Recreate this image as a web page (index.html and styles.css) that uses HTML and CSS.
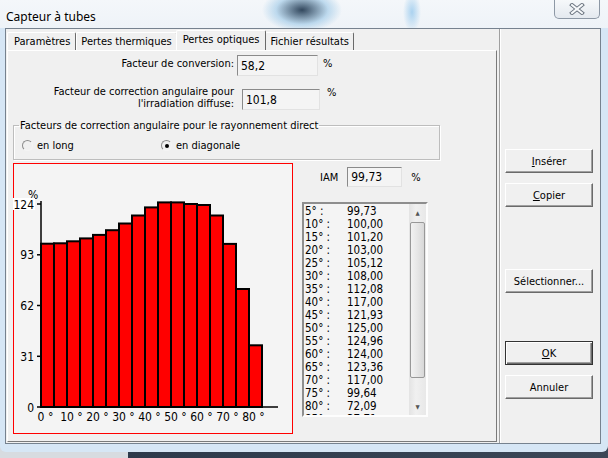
FILE: index.html
```html
<!DOCTYPE html>
<html lang="fr">
<head>
    <meta charset="UTF-8">
    <title>Capteur à tubes</title>
    <link rel="stylesheet" href="styles.css">
</head>
<body>
    <div class="window">
        <div class="titlebar">
            <span class="title">Capteur à tubes</span>
            <button class="close" type="button">
                <svg width="16" height="12" viewBox="0 0 16 12">
                    <path d="M3 2 L13 10 M13 2 L3 10" stroke="#6c7580" stroke-width="4" stroke-linecap="square"/>
                    <path d="M3 2 L13 10 M13 2 L3 10" stroke="#f7f9fb" stroke-width="2" stroke-linecap="square"/>
                </svg>
            </button>
        </div>

        <div class="client">
            <div class="tabs-pane">
                <div class="tab-strip">
                    <div class="tab first">Paramètres</div>
                    <div class="tab">Pertes thermiques</div>
                    <div class="tab active">Pertes optiques</div>
                    <div class="tab">Fichier résultats</div>
                </div>

                <div class="tab-page">
                    <div class="field">
                        <label class="field-label">Facteur de conversion:</label>
                        <div class="box conv">58,2</div>
                        <span class="unit">%</span>
                    </div>

                    <div class="field diffuse">
                        <label class="field-label">Facteur de correction angulaire pour<br>l'irradiation diffuse:</label>
                        <div class="box">101,8</div>
                        <span class="unit">%</span>
                    </div>

                    <fieldset class="group">
                        <legend>Facteurs de correction angulaire pour le rayonnement direct</legend>
                        <div class="radios">
                            <label class="radio"><span class="dot"></span>en long</label>
                            <label class="radio"><span class="dot checked"></span>en diagonale</label>
                        </div>
                    </fieldset>

                    <div class="chart-row">
                        <div class="chart">
                            <svg width="280" height="271" viewBox="0 0 280 271">
                                <rect x="0.5" y="0.5" width="279" height="270" fill="#f4f4f4" stroke="#ff0000"/>
                                <text class="axis-text" x="15" y="36">%</text>
                                <rect x="0" y="35" width="22" height="12" fill="#ffffff"/>

                                <g fill="#ff0000" stroke="#000" stroke-width="2">
                                    <rect x="28" y="80.7" width="13" height="163.3"/>
                                    <rect x="41" y="80.3" width="13" height="163.7"/>
                                    <rect x="54" y="78.3" width="13" height="165.7"/>
                                    <rect x="67" y="75.4" width="13" height="168.6"/>
                                    <rect x="80" y="71.9" width="13" height="172.1"/>
                                    <rect x="93" y="67.2" width="13" height="176.8"/>
                                    <rect x="106" y="60.5" width="13" height="183.5"/>
                                    <rect x="119" y="52.5" width="13" height="191.5"/>
                                    <rect x="132" y="44.4" width="13" height="199.6"/>
                                    <rect x="145" y="39.4" width="13" height="204.6"/>
                                    <rect x="158" y="39.4" width="13" height="204.6"/>
                                    <rect x="171" y="41" width="13" height="203"/>
                                    <rect x="184" y="42" width="13" height="202"/>
                                    <rect x="197" y="52.5" width="13" height="191.5"/>
                                    <rect x="210" y="80.9" width="13" height="163.1"/>
                                    <rect x="223" y="126" width="13" height="118"/>
                                    <rect x="236" y="182.3" width="13" height="61.7"/>
                                </g>

                                <g stroke="#000" stroke-width="1.5">
                                    <line x1="28" y1="38" x2="28" y2="244"/>
                                    <line x1="28" y1="244" x2="265" y2="244"/>
                                    <line x1="24" y1="41" x2="28" y2="41"/>
                                    <line x1="24" y1="91.8" x2="28" y2="91.8"/>
                                    <line x1="24" y1="142.5" x2="28" y2="142.5"/>
                                    <line x1="24" y1="193.3" x2="28" y2="193.3"/>
                                    <line x1="24" y1="244" x2="28" y2="244"/>
                                </g>

                                <g class="axis-text" text-anchor="end">
                                    <text x="21" y="45.5">124</text>
                                    <text x="21" y="96.3">93</text>
                                    <text x="21" y="147">62</text>
                                    <text x="21" y="197.8">31</text>
                                    <text x="21" y="248.5">0</text>
                                </g>

                                <g class="axis-text">
                                    <text x="24.6" y="258">0 °</text>
                                    <text x="47.2" y="258">10 °</text>
                                    <text x="73.2" y="258">20 °</text>
                                    <text x="99.2" y="258">30 °</text>
                                    <text x="125.2" y="258">40 °</text>
                                    <text x="151.2" y="258">50 °</text>
                                    <text x="177.2" y="258">60 °</text>
                                    <text x="203.2" y="258">70 °</text>
                                    <text x="229.2" y="258">80 °</text>
                                </g>
                            </svg>
                        </div>

                        <div class="iam-col">
                            <div class="iam-row">
                                <span>IAM</span>
                                <div class="box iam">99,73</div>
                                <span class="unit">%</span>
                            </div>

                            <div class="list">
                                <div class="list-items">
                                    <div class="item"><span class="deg">5° :</span><span>99,73</span></div>
                                    <div class="item"><span class="deg">10° :</span><span>100,00</span></div>
                                    <div class="item"><span class="deg">15° :</span><span>101,20</span></div>
                                    <div class="item"><span class="deg">20° :</span><span>103,00</span></div>
                                    <div class="item"><span class="deg">25° :</span><span>105,12</span></div>
                                    <div class="item"><span class="deg">30° :</span><span>108,00</span></div>
                                    <div class="item"><span class="deg">35° :</span><span>112,08</span></div>
                                    <div class="item"><span class="deg">40° :</span><span>117,00</span></div>
                                    <div class="item"><span class="deg">45° :</span><span>121,93</span></div>
                                    <div class="item"><span class="deg">50° :</span><span>125,00</span></div>
                                    <div class="item"><span class="deg">55° :</span><span>124,96</span></div>
                                    <div class="item"><span class="deg">60° :</span><span>124,00</span></div>
                                    <div class="item"><span class="deg">65° :</span><span>123,36</span></div>
                                    <div class="item"><span class="deg">70° :</span><span>117,00</span></div>
                                    <div class="item"><span class="deg">75° :</span><span>99,64</span></div>
                                    <div class="item"><span class="deg">80° :</span><span>72,09</span></div>
                                    <div class="item"><span class="deg">85° :</span><span>37,71</span></div>
                                </div>
                                <div class="scrollbar">
                                    <div class="arrow">&#9650;</div>
                                    <div class="track"><div class="thumb"></div></div>
                                    <div class="arrow">&#9660;</div>
                                </div>
                            </div>
                        </div>
                    </div>
                </div>
            </div>

            <div class="side">
                <button type="button" class="btn insert"><u>I</u>nsérer</button>
                <button type="button" class="btn copy"><u>C</u>opier</button>
                <button type="button" class="btn select">Sélectionner...</button>
                <button type="button" class="btn ok"><u>O</u>K</button>
                <button type="button" class="btn cancel">Annuler</button>
            </div>
        </div>
    </div>
</body>
</html>
```

FILE: styles.css
```css
* {
    box-sizing: border-box;
}
body {
    margin: 0;
    width: 608px;
    height: 458px;
    overflow: hidden;
    background: linear-gradient(to right, #d7dbe0 0, #d7dbe0 128px, #2d3a4b 128px, #3c4757 100%);
    font-family: "DejaVu Sans Condensed", "Liberation Sans", sans-serif;
    font-size: 11px;
    color: #000;
}
.window {
    width: 608px;
    height: 452px;
    background: #d6e6f5;
    border-radius: 0 0 6px 6px;
    display: flex;
    flex-direction: column;
}
.titlebar {
    height: 28px;
    display: flex;
    align-items: flex-start;
    background:
        radial-gradient(ellipse 40px 22px at 302px 10px, rgba(40, 62, 85, 0.95), rgba(110, 175, 220, 0.4) 65%, transparent),
        radial-gradient(ellipse 9px 20px at 412px 12px, rgba(140, 195, 235, 0.7), transparent),
        linear-gradient(#f4f7fa, #eef3f8);
}
.title {
    font-family: "Noto Sans", "Open Sans", sans-serif;
    font-size: 12px;
    margin: 8px 0 0 6px;
    text-shadow: 0 0 5px #fff, 0 0 8px #fff;
}
.close {
    margin-left: auto;
    margin-right: 8px;
    width: 46px;
    height: 19px;
    padding: 0;
    border: 1px solid #8d98a5;
    border-top: none;
    border-radius: 0 0 5px 5px;
    background: linear-gradient(#f6f8fa, #e4e9ef);
    display: flex;
    align-items: center;
    justify-content: center;
}
.client {
    margin: 0 7px 0 5px;
    height: 416px;
    border: 1px solid #76828f;
    background: #f0f0f0;
    display: flex;
}
.tabs-pane {
    width: 494px;
    padding: 1px 2px 1px 1px;
    border-right: 1px solid #a0a0a0;
    display: flex;
    flex-direction: column;
}
.tab-strip {
    height: 20px;
    display: flex;
    align-items: flex-end;
}
.tab {
    height: 18px;
    padding: 2px 4px 0 4px;
    border: 1px solid #fff;
    border-right: 1px solid #6a6a6a;
    border-bottom: none;
    border-radius: 2px 2px 0 0;
    white-space: nowrap;
}
.tab.first {
    padding: 2px 5px 0 6px;
}
.tab.active {
    height: 20px;
    padding: 2px 6px 0 6px;
    margin: 0 -1px 0 -1px;
    position: relative;
    background: #f0f0f0;
}
.tab-page {
    flex: 1;
    padding: 4px 0 0 0;
    border: 1px solid #fff;
    border-right-color: #7a7a7a;
    border-bottom-color: #7a7a7a;
}
.field {
    display: flex;
    align-items: flex-start;
}
.field-label {
    width: 226px;
    text-align: right;
    padding-top: 2px;
    line-height: 13px;
}
.box {
    height: 21px;
    padding: 3px 3px 0 3px;
    font-size: 12px;
    background: #f4f4f4;
    border: 1px solid;
    border-color: #8a8a8a #e2e2e2 #e2e2e2 #8a8a8a;
}
.box.conv {
    width: 81px;
    margin-left: 3px;
}
.unit {
    padding-top: 2px;
    line-height: 13px;
    margin-left: 5px;
}
.field.diffuse {
    margin-top: 13px;
}
.field.diffuse .field-label {
    line-height: 12px;
    padding-top: 0;
    margin-top: -3px;
}
.field.diffuse .box {
    width: 78px;
    margin-left: 8px;
}
.field.diffuse .unit {
    margin-left: 7px;
    padding-top: 0;
    margin-top: -3px;
}
.group {
    margin: 9px 0 0 5px;
    width: 427px;
    padding: 7px 0 7px 8px;
    border: 1px solid #bdbdbd;
    box-shadow: inset 1px 1px #fff, 1px 1px #fff;
}
.group legend {
    padding: 0 1px;
    margin-left: -3px;
    line-height: 13px;
}
.radios {
    display: grid;
    grid-template-columns: 139px auto;
    line-height: 13px;
}
.radio {
    display: flex;
    align-items: center;
    gap: 4px;
}
.dot {
    width: 11px;
    height: 11px;
    border-radius: 50%;
    border: 1px solid;
    border-color: #8c8c8c #f4f4f4 #f4f4f4 #8c8c8c;
    background: #f0f0f0;
    display: flex;
    align-items: center;
    justify-content: center;
}
.dot.checked::after {
    content: "";
    width: 4px;
    height: 4px;
    border-radius: 50%;
    background: #000;
}
.chart-row {
    margin-top: 3px;
    display: flex;
    align-items: flex-start;
}
.chart {
    margin-left: 5px;
    width: 280px;
    height: 271px;
}
.chart svg {
    display: block;
}
.axis-text {
    font-family: "DejaVu Sans Condensed", "Liberation Sans", sans-serif;
    font-size: 12px;
    fill: #000;
}
.iam-col {
    margin-left: 9px;
    width: 126px;
}
.iam-row {
    margin-top: 4px;
    padding-left: 18px;
    display: flex;
    align-items: center;
}
.box.iam {
    width: 55px;
    height: 20px;
    padding-top: 2px;
    margin-left: 9px;
}
.iam-row .unit {
    margin-left: 9px;
    padding-top: 0;
}
.list {
    margin-top: 15px;
    height: 215px;
    display: flex;
    border: 2px solid;
    border-color: #8e8e8e #fdfdfd #fdfdfd #8e8e8e;
    background: #f4f4f4;
}
.list-items {
    flex: 1;
    overflow: hidden;
    padding: 1px 0 0 1px;
    font-size: 11.5px;
}
.item {
    display: flex;
    line-height: 13px;
}
.deg {
    width: 42px;
}
.scrollbar {
    width: 17px;
    display: flex;
    flex-direction: column;
    background: linear-gradient(to right, #e3e3e3, #f0f0f0 40%, #e8e8e8);
}
.arrow {
    height: 17px;
    font-size: 6px;
    color: #555;
    display: flex;
    align-items: center;
    justify-content: center;
}
.track {
    flex: 1;
    padding: 1px 1px;
}
.thumb {
    height: 156px;
    border: 1px solid #989898;
    border-radius: 2px;
    background: linear-gradient(to right, #f2f2f2, #e6e6e6 50%, #d8d8d8);
}
.side {
    width: 99px;
    padding: 0 6px 0 4px;
    border-left: 1px solid #fff;
    display: flex;
    flex-direction: column;
}
.btn {
    height: 24px;
    padding: 0;
    font-family: "DejaVu Sans Condensed", "Liberation Sans", sans-serif;
    font-size: 11px;
    color: #000;
    background: #f0f0f0;
    border: 1px solid;
    border-color: #fff #6a6a6a #6a6a6a #fff;
    box-shadow: inset -1px -1px #a0a0a0;
}
.btn.insert {
    margin-top: 120px;
}
.btn.copy {
    margin-top: 10px;
}
.btn.select {
    margin-top: 62px;
}
.btn.ok {
    margin-top: 48px;
    border: 1px solid #333;
    box-shadow: inset 1px 1px #fff, inset -1px -1px #6a6a6a, inset -2px -2px #a0a0a0;
}
.btn.cancel {
    margin-top: 10px;
}
```
